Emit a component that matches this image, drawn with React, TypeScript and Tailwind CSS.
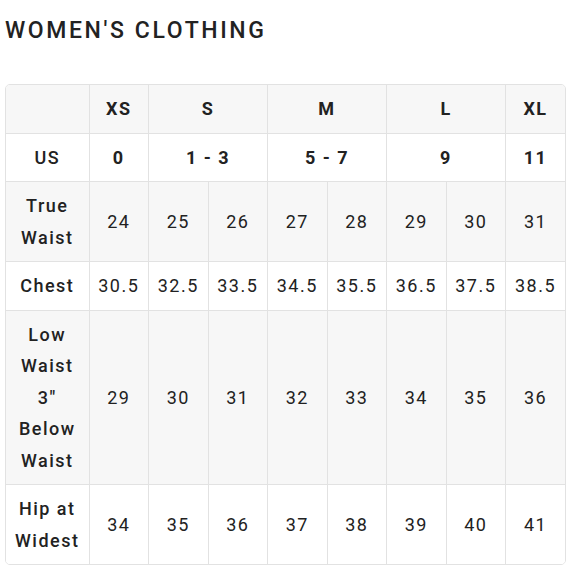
import React from "react";

const sizes = [
  { label: "XS", span: 1, us: "0" },
  { label: "S", span: 2, us: "1 - 3" },
  { label: "M", span: 2, us: "5 - 7" },
  { label: "L", span: 2, us: "9" },
  { label: "XL", span: 1, us: "11" },
];

const rows: { label: string[]; values: string[]; shaded: boolean }[] = [
  { label: ["True", "Waist"], values: ["24", "25", "26", "27", "28", "29", "30", "31"], shaded: true },
  { label: ["Chest"], values: ["30.5", "32.5", "33.5", "34.5", "35.5", "36.5", "37.5", "38.5"], shaded: false },
  { label: ["Low", "Waist", "3\"", "Below", "Waist"], values: ["29", "30", "31", "32", "33", "34", "35", "36"], shaded: true },
  { label: ["Hip at", "Widest"], values: ["34", "35", "36", "37", "38", "39", "40", "41"], shaded: false },
];

export default function App() {
  return (
    <div className="w-[580px] h-[580px] bg-white text-[#222] font-['Roboto',sans-serif]">
      {/* Title */}
      <h1 className="pl-[5px] pt-[15px] text-[23px] leading-[32px] font-medium tracking-[2.6px]">
        WOMEN'S CLOTHING
      </h1>

      {/* Size chart */}
      <div className="ml-[5px] mt-[37px] w-[561px] border border-[#e2e2e2] rounded-[5px] overflow-hidden">
        <table className="w-full table-fixed border-collapse border-hidden text-[18px] leading-[31.5px] tracking-[1.5px] text-center">
          <colgroup>
            <col className="w-[83px]" />
            <col /><col /><col /><col /><col /><col /><col /><col />
          </colgroup>
          <tbody>
            <tr className="bg-[#f7f7f7]">
              <td className="border border-[#e2e2e2] py-[8px]"></td>
              {sizes.map((s) => (
                <td key={s.label} colSpan={s.span} className="border border-[#e2e2e2] py-[8px] font-bold">
                  {s.label}
                </td>
              ))}
            </tr>
            <tr className="bg-white">
              <td className="border border-[#e2e2e2] py-[8px] font-medium">US</td>
              {sizes.map((s) => (
                <td key={s.label} colSpan={s.span} className="border border-[#e2e2e2] py-[8px] font-bold">
                  {s.us}
                </td>
              ))}
            </tr>
            {rows.map((r) => (
              <tr key={r.label.join(" ")} className={r.shaded ? "bg-[#f7f7f7]" : "bg-white"}>
                <td className="border border-[#e2e2e2] py-[8px] font-medium">
                  {r.label.map((l) => (
                    <div key={l}>{l}</div>
                  ))}
                </td>
                {r.values.map((v, i) => (
                  <td key={i} className="border border-[#e2e2e2] py-[8px] px-0">
                    {v}
                  </td>
                ))}
              </tr>
            ))}
          </tbody>
        </table>
      </div>
    </div>
  );
}
